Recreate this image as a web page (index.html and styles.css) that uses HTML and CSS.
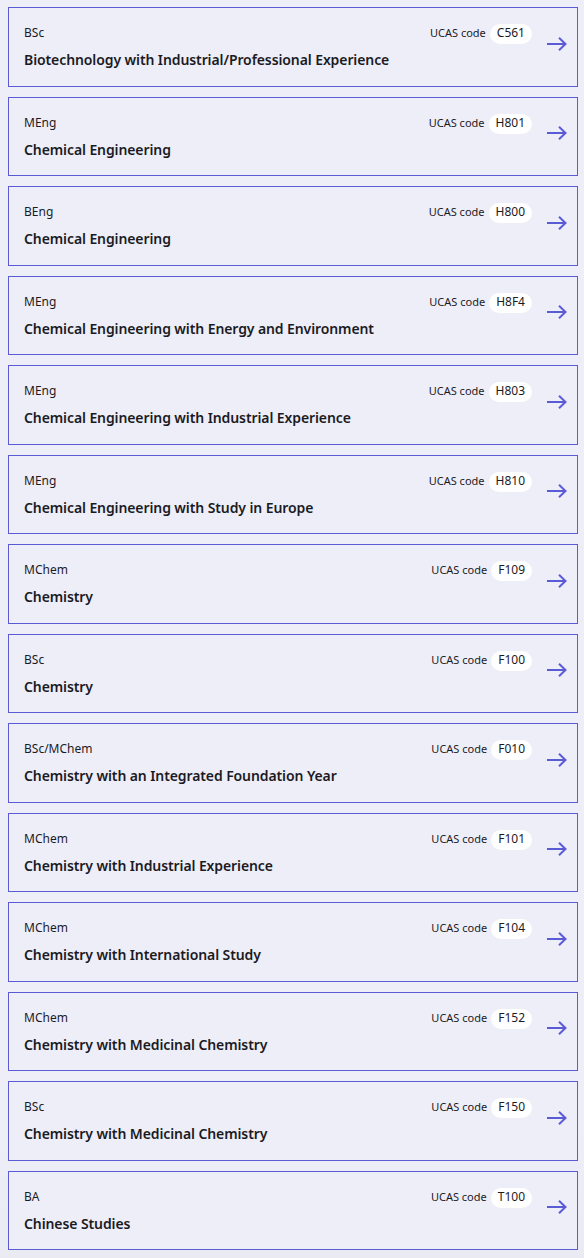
FILE: index.html
```
<!DOCTYPE html>
<html lang="en">
<head>
    <meta charset="UTF-8" />
    <meta name="viewport" content="width=device-width, initial-scale=1" />
    <title>Courses</title>
    <link rel="stylesheet" href="styles.css">
</head>
<body>
    <div class="course-list">
        <a class="course-card" href="#">
            <div class="course-info">
                <div class="course-top">
                    <span class="degree">BSc</span>
                    <span class="ucas">UCAS code <span class="code">C561</span></span>
                </div>
                <div class="title">Biotechnology with Industrial/Professional Experience</div>
            </div>
            <svg class="arrow" viewBox="0 0 20 14"><path d="M0 7H18.5M12 0.8L18.5 7L12 13.2"/></svg>
        </a>
        <a class="course-card" href="#">
            <div class="course-info">
                <div class="course-top">
                    <span class="degree">MEng</span>
                    <span class="ucas">UCAS code <span class="code">H801</span></span>
                </div>
                <div class="title">Chemical Engineering</div>
            </div>
            <svg class="arrow" viewBox="0 0 20 14"><path d="M0 7H18.5M12 0.8L18.5 7L12 13.2"/></svg>
        </a>
        <a class="course-card" href="#">
            <div class="course-info">
                <div class="course-top">
                    <span class="degree">BEng</span>
                    <span class="ucas">UCAS code <span class="code">H800</span></span>
                </div>
                <div class="title">Chemical Engineering</div>
            </div>
            <svg class="arrow" viewBox="0 0 20 14"><path d="M0 7H18.5M12 0.8L18.5 7L12 13.2"/></svg>
        </a>
        <a class="course-card" href="#">
            <div class="course-info">
                <div class="course-top">
                    <span class="degree">MEng</span>
                    <span class="ucas">UCAS code <span class="code">H8F4</span></span>
                </div>
                <div class="title">Chemical Engineering with Energy and Environment</div>
            </div>
            <svg class="arrow" viewBox="0 0 20 14"><path d="M0 7H18.5M12 0.8L18.5 7L12 13.2"/></svg>
        </a>
        <a class="course-card" href="#">
            <div class="course-info">
                <div class="course-top">
                    <span class="degree">MEng</span>
                    <span class="ucas">UCAS code <span class="code">H803</span></span>
                </div>
                <div class="title">Chemical Engineering with Industrial Experience</div>
            </div>
            <svg class="arrow" viewBox="0 0 20 14"><path d="M0 7H18.5M12 0.8L18.5 7L12 13.2"/></svg>
        </a>
        <a class="course-card" href="#">
            <div class="course-info">
                <div class="course-top">
                    <span class="degree">MEng</span>
                    <span class="ucas">UCAS code <span class="code">H810</span></span>
                </div>
                <div class="title">Chemical Engineering with Study in Europe</div>
            </div>
            <svg class="arrow" viewBox="0 0 20 14"><path d="M0 7H18.5M12 0.8L18.5 7L12 13.2"/></svg>
        </a>
        <a class="course-card" href="#">
            <div class="course-info">
                <div class="course-top">
                    <span class="degree">MChem</span>
                    <span class="ucas">UCAS code <span class="code">F109</span></span>
                </div>
                <div class="title">Chemistry</div>
            </div>
            <svg class="arrow" viewBox="0 0 20 14"><path d="M0 7H18.5M12 0.8L18.5 7L12 13.2"/></svg>
        </a>
        <a class="course-card" href="#">
            <div class="course-info">
                <div class="course-top">
                    <span class="degree">BSc</span>
                    <span class="ucas">UCAS code <span class="code">F100</span></span>
                </div>
                <div class="title">Chemistry</div>
            </div>
            <svg class="arrow" viewBox="0 0 20 14"><path d="M0 7H18.5M12 0.8L18.5 7L12 13.2"/></svg>
        </a>
        <a class="course-card" href="#">
            <div class="course-info">
                <div class="course-top">
                    <span class="degree">BSc/MChem</span>
                    <span class="ucas">UCAS code <span class="code">F010</span></span>
                </div>
                <div class="title">Chemistry with an Integrated Foundation Year</div>
            </div>
            <svg class="arrow" viewBox="0 0 20 14"><path d="M0 7H18.5M12 0.8L18.5 7L12 13.2"/></svg>
        </a>
        <a class="course-card" href="#">
            <div class="course-info">
                <div class="course-top">
                    <span class="degree">MChem</span>
                    <span class="ucas">UCAS code <span class="code">F101</span></span>
                </div>
                <div class="title">Chemistry with Industrial Experience</div>
            </div>
            <svg class="arrow" viewBox="0 0 20 14"><path d="M0 7H18.5M12 0.8L18.5 7L12 13.2"/></svg>
        </a>
        <a class="course-card" href="#">
            <div class="course-info">
                <div class="course-top">
                    <span class="degree">MChem</span>
                    <span class="ucas">UCAS code <span class="code">F104</span></span>
                </div>
                <div class="title">Chemistry with International Study</div>
            </div>
            <svg class="arrow" viewBox="0 0 20 14"><path d="M0 7H18.5M12 0.8L18.5 7L12 13.2"/></svg>
        </a>
        <a class="course-card" href="#">
            <div class="course-info">
                <div class="course-top">
                    <span class="degree">MChem</span>
                    <span class="ucas">UCAS code <span class="code">F152</span></span>
                </div>
                <div class="title">Chemistry with Medicinal Chemistry</div>
            </div>
            <svg class="arrow" viewBox="0 0 20 14"><path d="M0 7H18.5M12 0.8L18.5 7L12 13.2"/></svg>
        </a>
        <a class="course-card" href="#">
            <div class="course-info">
                <div class="course-top">
                    <span class="degree">BSc</span>
                    <span class="ucas">UCAS code <span class="code">F150</span></span>
                </div>
                <div class="title">Chemistry with Medicinal Chemistry</div>
            </div>
            <svg class="arrow" viewBox="0 0 20 14"><path d="M0 7H18.5M12 0.8L18.5 7L12 13.2"/></svg>
        </a>
        <a class="course-card" href="#">
            <div class="course-info">
                <div class="course-top">
                    <span class="degree">BA</span>
                    <span class="ucas">UCAS code <span class="code">T100</span></span>
                </div>
                <div class="title">Chinese Studies</div>
            </div>
            <svg class="arrow" viewBox="0 0 20 14"><path d="M0 7H18.5M12 0.8L18.5 7L12 13.2"/></svg>
        </a>
    </div>
</body>
</html>
```

FILE: styles.css
```
body {
    margin: 0;
    font-family: 'Noto Sans', 'Open Sans', sans-serif;
    color: #1b1b1f;
    background: linear-gradient(180deg, #eeeef9 0%, #eeeef9 90%, #eaeaf3 100%);
    min-height: 1258px;
}
.course-list {
    display: flex;
    flex-direction: column;
    gap: 10px;
    padding: 7px 6px 8px 8px;
}
.course-card {
    display: flex;
    align-items: center;
    height: 79.5px;
    box-sizing: border-box;
    padding: 0 10px 0 15px;
    border: 1px solid #5b5bd6;
    background: #eeeef9;
    color: inherit;
    text-decoration: none;
}
.course-info {
    flex: 1;
    display: flex;
    flex-direction: column;
    gap: 10px;
    margin-top: 1px;
}
.course-top {
    display: flex;
    justify-content: space-between;
    align-items: baseline;
    height: 16px;
}
.degree {
    font-size: 12px;
    line-height: 16px;
}
.ucas {
    display: flex;
    align-items: baseline;
    gap: 4px;
    font-size: 11px;
    line-height: 16px;
}
.code {
    background: #ffffff;
    border-radius: 10px;
    padding: 1px 7px 3px;
    font-size: 12px;
    line-height: 16px;
}
.title {
    font-size: 14px;
    font-weight: 600;
    line-height: 20px;
    letter-spacing: -0.1px;
}
.arrow {
    width: 20px;
    height: 14px;
    margin-left: 15px;
    margin-top: -6px;
    fill: none;
    stroke: #5b5bd6;
    stroke-width: 2;
}
```
